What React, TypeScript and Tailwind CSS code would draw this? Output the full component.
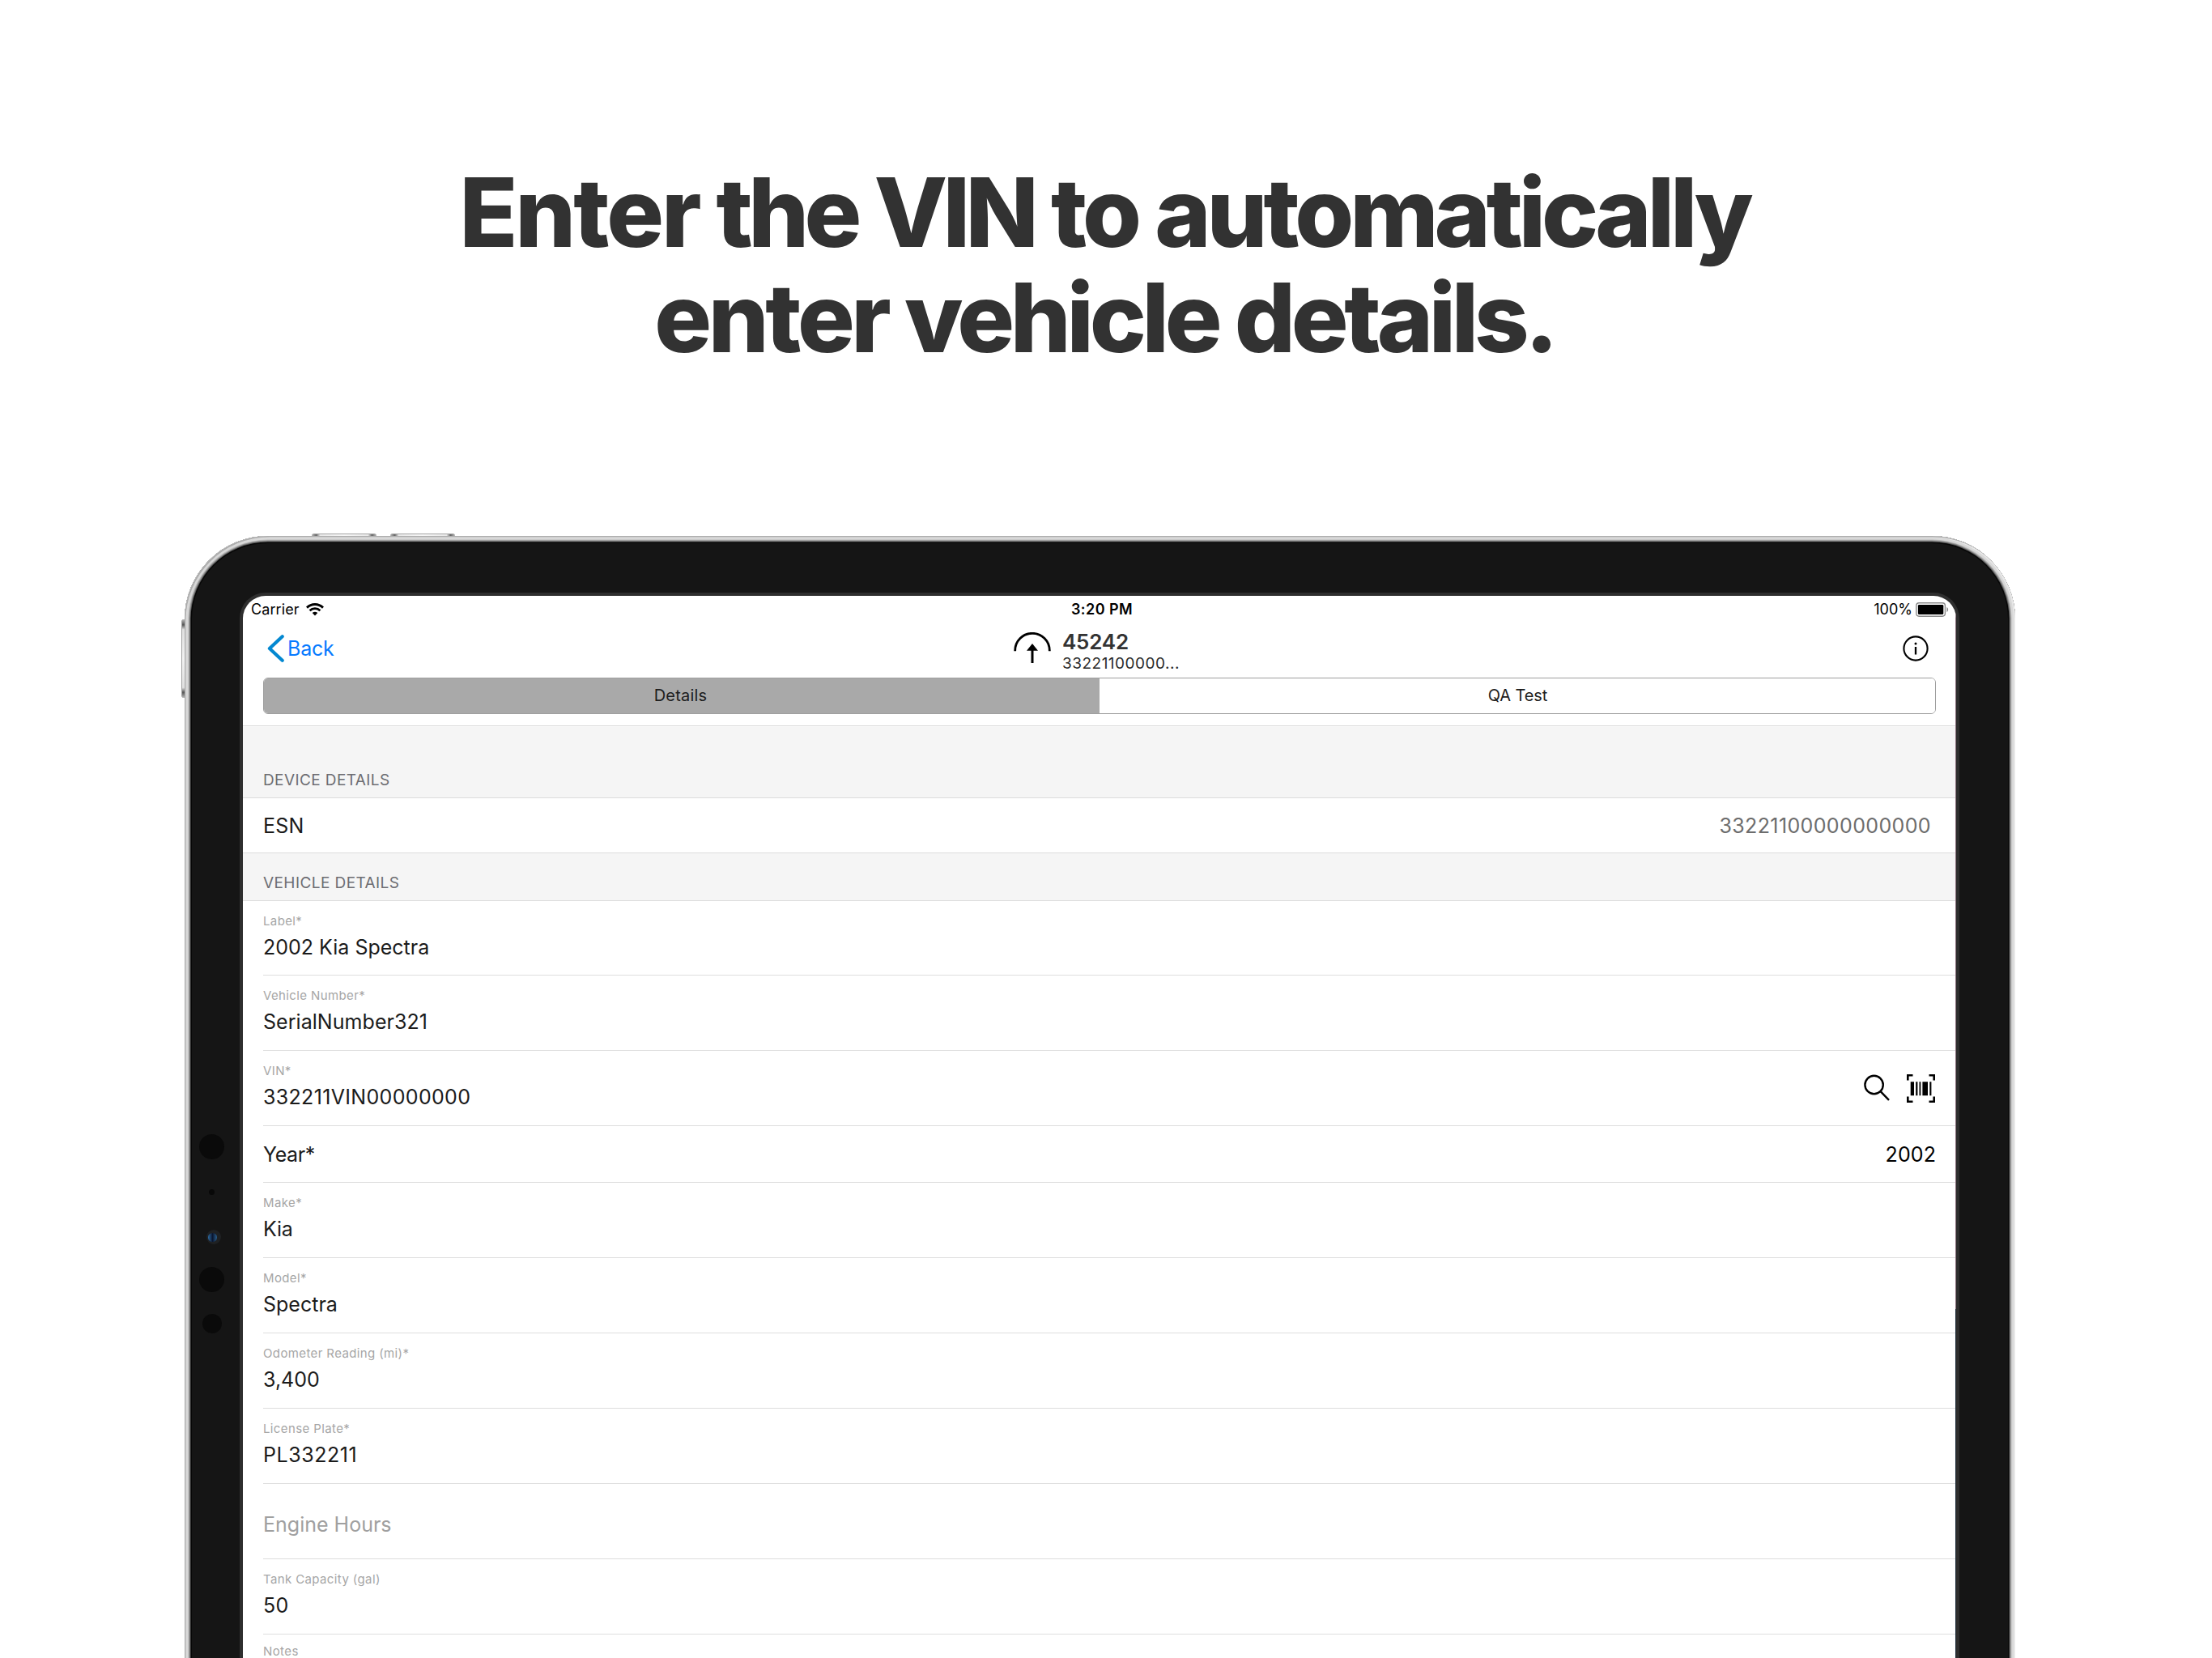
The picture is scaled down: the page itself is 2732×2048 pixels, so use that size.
import React from 'react';

const VALUE = 'text-[25px] leading-[32px] whitespace-pre';

function WifiIcon() {
  return (
    <svg width="22" height="16" viewBox="0 0 22 16" fill="none" stroke="#000" strokeWidth="2.9">
      <path d="M1 5.6C6.6 0.1 15.4 0.1 21 5.6" />
      <path d="M4.6 9.2C8.2 5.8 13.8 5.8 17.4 9.2" />
      <path d="M7.7 12.1Q11 9.2 14.3 12.1L11 15.6Z" fill="#000" stroke="none" />
    </svg>
  );
}

function BatteryIcon() {
  return (
    <svg width="41" height="18" viewBox="0 0 41 18" fill="none">
      <rect x="0.8" y="0.8" width="35.6" height="16.4" rx="3.4" stroke="#8a8a8a" strokeWidth="1.4" />
      <rect x="2.9" y="2.9" width="31.4" height="12.2" rx="1.4" fill="#000" />
      <path d="M38.4 6C40.7 7 40.7 11 38.4 12Z" fill="#8a8a8a" />
    </svg>
  );
}

function DeviceIcon() {
  return (
    <svg width="46" height="40" viewBox="0 0 46 40" fill="none">
      <path d="M1.7 23.3V22.6A21.3 21.3 0 0 1 44.3 22.6V23.3" stroke="#000" strokeWidth="2.8" />
      <path d="M23 38V20" stroke="#000" strokeWidth="3" />
      <path d="M23 14L30 22.8H16Z" fill="#000" />
    </svg>
  );
}

function InfoIcon() {
  return (
    <svg width="32" height="32" viewBox="0 0 32 32" fill="none">
      <circle cx="16" cy="16" r="14.6" stroke="#000" strokeWidth="2.1" />
      <circle cx="16" cy="9.9" r="1.5" fill="#000" />
      <path d="M16 13.9V23.4" stroke="#000" strokeWidth="2.3" />
    </svg>
  );
}

function SearchIcon() {
  return (
    <svg width="32" height="34" viewBox="0 0 32 34" fill="none" stroke="#000" strokeWidth="2.4">
      <circle cx="12.6" cy="13" r="11.2" />
      <path d="M20.6 21.2L31 31.8" />
    </svg>
  );
}

function BarcodeIcon() {
  return (
    <svg width="35" height="35" viewBox="0 0 35 35" fill="none">
      <path d="M1.3 7.5V1.3H7.5M27.5 1.3H33.7V7.5M33.7 27.5V33.7H27.5M7.5 33.7H1.3V27.5" stroke="#000" strokeWidth="2.6" />
      <path
        d="M4.7 9.2H9V26.2H4.7ZM11.2 9.2H13.4V26.2H11.2ZM15.5 9.2H17.3V26.2H15.5ZM19.4 9.2H26V26.2H19.4ZM28.3 9.2H30.4V26.2H28.3Z"
        fill="#000"
      />
    </svg>
  );
}

function StatusBar() {
  return (
    <div className="flex h-8 items-center pl-[10px] pr-[9px] pt-px text-[18px] leading-8 text-black">
      <div className="flex flex-1 items-center gap-[8px]">
        <span className="tracking-[0.08px]">Carrier</span>
        <WifiIcon />
      </div>
      <div className="pl-[5px] font-semibold tracking-[0.43px]">3:20 PM</div>
      <div className="flex flex-1 items-center justify-end gap-[4px]">
        <span>100%</span>
        <BatteryIcon />
      </div>
    </div>
  );
}

function NavBar() {
  return (
    <div className="flex h-[69px] items-start pr-[34px]">
      <div className="flex w-[952px] items-center gap-[4px] pl-[30px] pt-4">
        <svg width="21" height="34" viewBox="0 0 21 34" fill="none">
          <path d="M18.7 2.3L2.9 17L18.7 31.7" stroke="#0488d1" strokeWidth="4.2" strokeLinecap="round" strokeLinejoin="round" />
        </svg>
        <span className="text-[25px] leading-[34px] tracking-[-0.2px] text-[#067aff]">Back</span>
      </div>
      <div className="pt-[13px]">
        <DeviceIcon />
      </div>
      <div className="ml-[14px] flex flex-col pt-[10px]">
        <span className="text-[26px] leading-[30px] font-semibold tracking-[-0.2px] text-[#333]">45242</span>
        <span className="text-[19px] leading-6 tracking-[0.5px] text-[#2a2a2a]">33221100000...</span>
      </div>
      <div className="ml-auto pt-[17px]">
        <InfoIcon />
      </div>
    </div>
  );
}

function Segmented() {
  return (
    <div className="mx-[25px] flex h-[45px] overflow-hidden rounded-[6px] border border-[#9f9f9f] text-[20px] leading-[43px] text-[#1d1d1d]">
      <div className="w-1/2 bg-[#a9a9a9] pr-[3px] text-center tracking-[0.2px]">Details</div>
      <div className="w-1/2 bg-white pl-px text-center tracking-[-0.1px]">QA Test</div>
    </div>
  );
}

function Field({ label, value, spacing = '', first = false, children }: { label: string; value: string; spacing?: string; first?: boolean; children?: React.ReactNode }) {
  return (
    <div className={`ml-[25px] flex justify-between border-b border-[#dedede] ${first ? 'h-[92px]' : 'h-[93px]'}`}>
      <div className="flex flex-col pt-[15px]">
        <span className="text-[15px] leading-5 tracking-[0.38px] text-[#a6a6a6]">{label}</span>
        <span className={`mt-[6px] ${VALUE} ${spacing} text-[#1b1b1b]`}>{value}</span>
      </div>
      {children}
    </div>
  );
}

function Form() {
  return (
    <div>
      <div className="flex h-[88px] items-end border-b border-[#dcdcdc] bg-[#f5f5f5] pb-[9px] pl-[25px] text-[19px] leading-6 tracking-[0.4px] text-[#6d6d72]">
        DEVICE DETAILS
      </div>
      <div className={`flex h-[68px] items-center justify-between border-b border-[#dcdcdc] pl-[25px] pr-[31px] ${VALUE}`}>
        <span className="tracking-[0.2px] text-[#1b1b1b]">ESN</span>
        <span className="tracking-[0.37px] text-[#6d6d6d]">33221100000000000</span>
      </div>
      <div className="flex h-[59px] items-end border-b border-[#dcdcdc] bg-[#f5f5f5] pb-[9px] pl-[25px] text-[19px] leading-6 tracking-[0.42px] text-[#6d6d72]">
        VEHICLE DETAILS
      </div>
      <Field first label="Label*" value="2002 Kia Spectra" />
      <Field label="Vehicle Number*" value="SerialNumber321" spacing="tracking-[0.05px]" />
      <Field label="VIN*" value="332211VIN00000000" spacing="tracking-[0.33px]">
        <div className="flex items-center gap-[21px] pr-[26px]">
          <SearchIcon />
          <BarcodeIcon />
        </div>
      </Field>
      <div className={`ml-[25px] flex h-[70px] items-center justify-between border-b border-[#dedede] pr-[25px] ${VALUE} text-black`}>
        <span className="tracking-[-0.4px] text-[#1b1b1b]">Year*</span>
        <span className="tracking-[0.1px]">2002</span>
      </div>
      <Field label="Make*" value="Kia" spacing="tracking-[-0.2px]" />
      <Field label="Model*" value="Spectra" />
      <Field label="Odometer Reading (mi)*" value="3,400" />
      <Field label="License Plate*" value="PL332211" spacing="tracking-[0.55px]" />
      <div className={`ml-[25px] h-[93px] border-b border-[#dedede] pt-[34px] ${VALUE} text-[#a0a0a0]`}>Engine Hours</div>
      <Field label="Tank Capacity (gal)" value="50" spacing="tracking-[0.3px]" />
      <div className="ml-[25px] pt-[13px] text-[15px] leading-4 tracking-[0.4px] text-[#a6a6a6]">Notes</div>
    </div>
  );
}

function Sensors() {
  return (
    <>
      <div className="absolute left-[18px] top-[739px] size-[31px] rounded-full bg-[#0a0a0a]" />
      <div className="absolute left-[30px] top-[807px] size-[7px] rounded-full bg-[#080808]" />
      <div className="absolute left-[27px] top-[857px] flex size-[18px] items-center justify-center rounded-full bg-[#1f2123]">
        <div className="mr-[3px] size-[11px] rounded-full bg-linear-to-r from-[#2f6ea3] via-[#0a1630] via-50% to-[#2a6190]" />
      </div>
      <div className="absolute left-[18px] top-[903px] size-[31px] rounded-full bg-[#0a0a0a]" />
      <div className="absolute left-[22px] top-[961px] size-[24px] rounded-full bg-[#0a0a0a]" />
    </>
  );
}

function HardwareButtons() {
  const top =
    'absolute -top-[3px] h-[5px] w-[80px] rounded-t-[3px] border-t border-[#a5a5a5] bg-[linear-gradient(90deg,#bbb,#666_7%,#e8e8e8_13%,#f6f6f6_50%,#e8e8e8_87%,#666_93%,#bbb)]';
  return (
    <>
      <div className={`${top} left-[157px]`} />
      <div className={`${top} left-[254px]`} />
      <div className="absolute -left-[4px] top-[103px] h-[97px] w-[5px] rounded-l-[3px] border-l border-[#a0a0a0] bg-[linear-gradient(180deg,#bbb,#555_7%,#e0e0e0_13%,#f2f2f2_50%,#e0e0e0_87%,#555_93%,#bbb)]" />
    </>
  );
}

export default function App() {
  return (
    <div className="flex h-[2048px] w-[2732px] flex-col items-start overflow-hidden bg-white font-['Inter',sans-serif]">
      <h1 className="mt-[197px] w-full pr-[4px] text-center text-[118px] leading-[130px] font-extrabold text-[#323232]">
        <span className="block tracking-[-4.85px]">
          <span className="tracking-[-3px]">Enter</span> <span className="tracking-[-5.8px]">the</span>{' '}
          <span className="tracking-[-5.8px]">VIN</span> to <span className="tracking-[-5.1px]">automatically</span>
        </span>
        <span className="block tracking-[-5.3px]">
          <span className="tracking-[-4.4px]">enter</span> vehicle details.
        </span>
      </h1>
      <div className="relative ml-[228px] mt-[205px] w-[2261px] shrink-0">
        <HardwareButtons />
        <div className="relative h-[1500px] rounded-t-[103px] bg-[#151515] pl-[68px] pr-[69px] pt-[70px] shadow-[inset_1.5px_1.5px_0_0_#adadad,inset_0_0_0_2px_#e8e8e8,inset_0_0_0_4.5px_#d8d8d8,inset_0_0_0_5.5px_#b8b8b8,inset_0_0_0_6.5px_#8f8f8f,inset_0_0_0_7.5px_#5a5a5a,inset_0_0_0_9px_#070707]">
          <Sensors />
          <div className="h-[1500px] rounded-t-[32px] bg-[#2e2e2e] px-[4px] pt-[4px]">
            <div className="relative h-[1500px] overflow-hidden rounded-t-[28px] bg-white">
              <StatusBar />
              <NavBar />
              <Segmented />
              <div className="mt-[14px] h-[2px] border-b border-[#f9f9f9] bg-[#dadada]" />
              <Form />
              <div className="absolute top-0 right-0 h-[881px] w-px bg-[#8d7480]" />
              <div className="absolute top-[881px] right-0 h-[600px] w-px bg-[#1c2b38]" />
            </div>
          </div>
        </div>
      </div>
    </div>
  );
}
